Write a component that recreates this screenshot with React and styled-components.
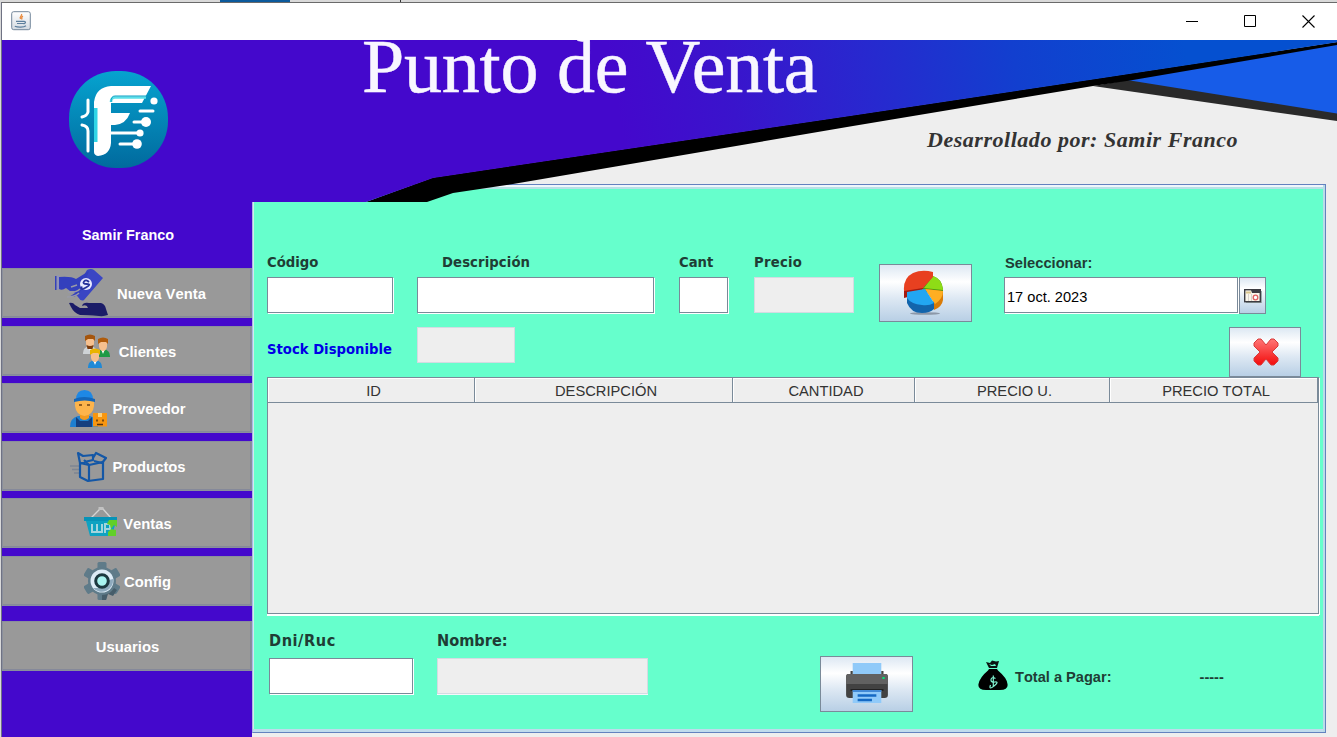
import React from "react";
import styled, { createGlobalStyle } from "styled-components";

const c = {
  purple: "#4408cc",
  mint: "#66ffcc",
  line: "#7a8a99",
  grey: "#999999",
  panel: "#eeeeee",
};

const Global = createGlobalStyle`
  * { box-sizing: border-box; }
  html, body { margin: 0; padding: 0; }
  body { background: #d9d9d9; font-family: "Liberation Sans", Arial, sans-serif; overflow: hidden; font-kerning: none; }
  button { font: inherit; cursor: pointer; }
`;

/* ---------- window ---------- */
const Desktop = styled.div`
  width: 1337px;
  height: 737px;
  padding: 2px 0 0 1px;
  background:
    linear-gradient(#0c5a9c, #0c5a9c) 220px 0 / 70px 2px no-repeat,
    linear-gradient(#333, #333) 400px 0 / 1px 2px no-repeat,
    #d9d9d9;
`;
const Window = styled.div`
  height: 735px;
  border-top: 1px solid #6a6a6a;
  border-left: 1px solid #6f7283;
  background: ${c.panel};
  display: flex;
  flex-direction: column;
`;
const TitleBar = styled.header`
  height: 37px;
  flex: none;
  background: #fff;
  display: flex;
  align-items: center;
  justify-content: space-between;
  padding: 0 0 2px 9px;
  svg { display: block; }
`;
const WindowControls = styled.div`
  display: flex;
  gap: 45px;
  padding: 2px 22px 0 0;
  align-items: center;
`;
const Body = styled.div`
  flex: 1;
  display: grid;
  grid-template-columns: 250px 1fr;
  min-height: 0;
`;

/* ---------- sidebar ---------- */
const Sidebar = styled.nav`
  background: ${c.purple};
  display: flex;
  flex-direction: column;
  align-items: stretch;
`;
const LogoWrap = styled.div`
  padding: 31px 0 0 67px;
  height: 185px;
  svg { display: block; }
`;
const UserName = styled.div`
  height: 43px;
  line-height: 20px;
  padding-left: 2px;
  text-align: center;
  color: #fff;
  font-weight: bold;
  font-size: 14.4px;
`;
const NavButton = styled.button`
  height: 50px;
  flex: none;
  margin: ${(p) => p.$gap}px 0 0;
  padding: 1px 0 0 1px;
  background: ${c.grey};
  border: 1px solid #8a8f9c;
  box-shadow: inset -1px -1px 0 #85899a;
  color: #fff;
  font-weight: bold;
  font-size: 14.8px;
  display: flex;
  align-items: center;
  justify-content: center;
  gap: 4px;
  overflow: hidden;
  svg { display: block; margin-top: -1px; flex: none; }
`;

/* ---------- header ---------- */
const Content = styled.main`
  display: flex;
  flex-direction: column;
  min-width: 0;
`;
const Header = styled.div`
  position: relative;
  z-index: 1;
  height: 144px;
  flex: none;
  display: flex;
  pointer-events: none;
`;
const BannerArt = styled.svg`
  position: absolute;
  left: 0;
  top: 0;
  display: block;
`;
const Title = styled.h1`
  position: relative;
  margin: -16px 0 0 110px;
  height: 84px;
  width: 470px;
  white-space: nowrap;
  font: normal 76px/84px "Liberation Serif", "Times New Roman", serif;
  letter-spacing: -0.25px;
  color: #f8f6ff;
  -webkit-text-stroke: 0.5px #f8f6ff;
  clip-path: inset(16px 0 0 0);
`;
const Credit = styled.div`
  position: relative;
  margin: 86px 0 0 95px;
  white-space: nowrap;
  font: italic bold 22px/28px "Liberation Serif", "Times New Roman", serif;
  letter-spacing: 0.53px;
  color: #333;
`;

/* ---------- sale panel ---------- */
const Panel = styled.section`
  width: 1074px;
  height: 549px;
  border: 1px solid #6382bf;
  border-left-color: #a9b8e8;
  background: ${c.mint};
  box-shadow: inset -2px 0 0 #b8dce8, inset 0 -3px 0 #c0dced, inset 0 2px 0 #f0f6fc, inset 0 4px 0 #b8e0e6, inset 1px 0 0 #d3ece9;
  padding: 67px 0 0 14px;
  display: flex;
  flex-direction: column;
`;
const FormRow = styled.div`
  display: flex;
  align-items: flex-start;
  height: ${(p) => p.$h}px;
  flex: none;
`;
const Field = styled.label`
  display: flex;
  flex-direction: column;
  margin-right: ${(p) => p.$after || 0}px;
`;
const Caption = styled.span`
  height: 25px;
  line-height: 20px;
  padding-left: ${(p) => p.$indent || 0}px;
  font-family: "DejaVu Sans Condensed", "DejaVu Sans", sans-serif;
  font-stretch: condensed;
  font-weight: bold;
  font-size: ${(p) => p.$size || 14.7}px;
  letter-spacing: ${(p) => p.$track || 0}px;
  color: #1f3d35;
  white-space: nowrap;
`;
const DateCaption = styled(Caption)`
  padding: 1px 0 0 1px;
  font-family: "Liberation Sans", Arial, sans-serif;
`;
const StockCaption = styled(Caption)`
  width: 150px;
  padding-top: 12px;
  color: #0000e6;
`;
const Input = styled.input`
  display: block;
  width: ${(p) => p.$w}px;
  height: 36px;
  margin: 0;
  padding: 3px 2px 0;
  outline: none;
  border: 1px solid ${c.line};
  border-radius: 0;
  background: #fff;
  box-shadow: 1px 1px 0 #fff;
  font: 14.6px "Liberation Sans", Arial, sans-serif;
  color: #000;
  &:disabled {
    background: ${c.panel};
    border-color: #d3dbe2;
    box-shadow: ${(p) => (p.$lined ? "0 1px 0 #f4f8fa" : "none")};
  }
`;
const MetalButton = styled.button`
  width: ${(p) => p.$w}px;
  height: ${(p) => p.$h}px;
  margin: ${(p) => p.$m || 0};
  padding: ${(p) => p.$pad || 0};
  flex: none;
  display: flex;
  align-items: center;
  justify-content: center;
  border: 1px solid ${c.line};
  background: linear-gradient(#dde8f3 0%, #ffffff 30%, #dde8f3 60%, #b8cfe5 100%);
  svg { display: block; }
`;
const DateRow = styled.div`
  display: flex;
  gap: 1px;
`;
const Table = styled.div`
  width: 1052px;
  height: 237px;
  flex: none;
  border: 1px solid ${c.line};
  background: ${c.panel};
  box-shadow: 1px 1px 0 #fff, 0 2px 0 #fff;
`;
const TableHead = styled.div`
  display: grid;
  grid-template-columns: 207px 258px 182px 195px 1fr;
  grid-auto-rows: 25px;
`;
const HeadCell = styled.div`
  border-right: 1px solid ${c.line};
  border-bottom: 1px solid ${c.line};
  box-shadow: inset 1px 1px 0 #fff;
  text-align: center;
  line-height: 27px;
  padding-left: 5px;
  font-size: 14.7px;
  color: #333;
`;
const Footer = styled.div`
  display: flex;
  align-items: flex-start;
  padding: 16px 0 0 2px;
`;
const FooterField = styled(Field)`
  ${Caption} { height: 28px; line-height: 22px; }
`;
const Total = styled.div`
  display: flex;
  align-items: flex-start;
  margin: 30px 0 0 65px;
  height: 34px;
  line-height: 34px;
  font-weight: bold;
  font-size: 14.6px;
  color: #1f3d35;
  svg { display: block; margin-right: 7px; }
`;
const Amount = styled.span`
  margin-left: 88px;
`;

/* ---------- drawings ---------- */
const JavaIcon = () => (
  <svg width="20" height="20" viewBox="0 0 20 20">
    <defs>
      <linearGradient id="jv" x1="0" y1="0" x2="0" y2="1">
        <stop offset="0" stopColor="#fff" />
        <stop offset="1" stopColor="#d3dae1" />
      </linearGradient>
    </defs>
    <rect x=".7" y=".7" width="18.6" height="18" rx="2" fill="url(#jv)" stroke="#73879b" />
    <path d="M10.5 3c1 2-2.600 2.500-1 5M12 5c-2 1-1.500 2-1 3.500" fill="none" stroke="#e98a3c" strokeWidth="1.300" />
    <path d="M5 10.300h8.500M6 12.500h7M3.800 15.300c3 1.200 9 1.200 11.200-.6M13 10.500c2-.3 2 2-.4 2.300" fill="none" stroke="#5d7f9d" strokeWidth="1.200" />
  </svg>
);

const Logo = () => (
  <svg width="99" height="97" viewBox="0 0 99 97">
    <defs>
      <linearGradient id="lg" x1="0" y1="0" x2="0" y2="1">
        <stop offset="0" stopColor="#06a3cf" />
        <stop offset="1" stopColor="#016a9e" />
      </linearGradient>
    </defs>
    <rect width="99" height="97" rx="47" fill="url(#lg)" />
    <path d="M42 15H82L73 32H42V42H61Q57 53 46 54H42V72Q41 84 29 85Q25 84 25 81V31Q27 16 42 15Z" fill="#fff" />
    <path d="M42 31q0-4.500 4-4.500h31" fill="none" stroke="#5adfe9" strokeWidth="2.600" />
    <path d="M42 31q0-6 4-6h32" fill="none" stroke="#0a9fc4" strokeWidth="1" />
    <rect x="25" y="37" width="3.500" height="34" fill="#31d5e6" />
    <g fill="none" stroke="#fff" strokeWidth="3" strokeLinecap="round">
      <path d="M19 29v12q-1 4-6 5" />
      <path d="M13 54q6 1 6 6v20" />
      <path d="M71 40h13M65 51h12M42 62h28M51 73h16" />
    </g>
    <g fill="#fff">
      <circle cx="85" cy="30" r="3.600" />
      <circle cx="77" cy="51" r="5" />
      <circle cx="71" cy="62" r="3.600" />
      <circle cx="68" cy="73" r="4.800" />
    </g>
  </svg>
);

const SaleIcon = () => (
  <svg width="64" height="50" viewBox="0 0 64 50">
    <path d="M38 2Q42 0 45 2L54 10L35 32Q32 34 29 29L25 24Z" fill="#3a46c4" />
    <path d="M6 8h1.500v14H6zM10 9Q22 8 27 11L40 3L34 18Q31 26 25 29L20 29L29 23H21L17 20Q13 23 10 21Z" fill="#3340bd" />
    <path d="M9 7.500v14" stroke="#8d90c8" strokeWidth="1.500" />
    <path d="M22 19l6-2M19 24q8 1 12-3M18 29q8 0 12-4" stroke="#9a9ba6" strokeWidth="1.500" fill="none" />
    <circle cx="37" cy="16" r="6" fill="#e8eaff" />
    <path d="M40 14q-3-3-5-.5t3 2.500-1 3.500-4-1" fill="none" stroke="#26329c" strokeWidth="1.800" />
    <path d="M20 35q4-1 6 2l5 3h8q-1-4-6-2 1-4 7-3h12q4 1 5 6l2 6q-4 1.500-9 1-13-1-19-1-6-2-9-8Z" fill="#1b1c68" />
  </svg>
);

const Person = ({ x, y, shirt, hair }) => (
  <g transform={`translate(${x} ${y})`}>
    <path d="M0 18q0-6 7-7 7 1 7 7v1H0z" fill={shirt} />
    <path d="M5 11h4l-2 5z" fill="#fff" />
    <path d="M3 3h8v6q-1 4-4 4T3 9z" fill="#f6c08e" />
    <path d="M2 6V1q5-3 10 0v5l-2-2H5z" fill={hair} />
  </g>
);

const ClientsIcon = () => (
  <svg width="36" height="36" viewBox="0 0 36 36">
    <Person x={4} y={2} shirt="#cfd3d6" hair="#a5560e" />
    <Person x={17} y={5} shirt="#1f9a45" hair="#b05c0c" />
    <path d="M7.500 12q3.500 2 7 0l-1 4h-5z" fill="#7b3b0c" />
    <Person x={9} y={16} shirt="#2089d6" hair="#e9b400" />
  </svg>
);

const SupplierIcon = () => (
  <svg width="39" height="40" viewBox="2 0 39 40">
    <path d="M3 39q0-9 8-11h12q8 2 8 11z" fill="#1e7fd0" />
    <path d="M9 29v10h16V29l-4 4h-8z" fill="#153f7f" />
    <path d="M13 24h9v6q-5 4-9 0z" fill="#f29a1f" />
    <path d="M8 12h19v6q-1 9-9.500 10Q9 27 8 18z" fill="#fdb44b" />
    <path d="M9 12Q9 2 17.500 2T26 12z" fill="#1e88e5" />
    <path d="M7 11q10-4 21 0v3q-10-3-21 0z" fill="#1466b8" />
    <path d="M12 17h3M20 17h3" stroke="#704214" strokeWidth="1.500" />
    <rect x="26" y="25" width="14" height="13.500" fill="#f8960f" />
    <path d="M31 25h4v4h-4z" fill="#ffd179" />
    <path d="M30 31.500v2m6-2v2m-6 3h6" stroke="#573410" strokeWidth="1.500" />
  </svg>
);

const BoxIcon = () => (
  <svg width="39" height="36" viewBox="0 0 39 36">
    <path d="M1 18h9M3 21.500h7M5 25h5" stroke="#7d8592" strokeWidth="1.500" />
    <g fill="none" stroke="#1457a6" strokeWidth="2.200" strokeLinejoin="round">
      <path d="M11 15v14l8 4 15-2V14l-14 3-9-2" />
      <path d="M20 17v16M11 15l-2-10 5 3 10-1v5l-13 3M20 17l-5-5M24 10l3-5 10 5-4 5-8-2" />
    </g>
  </svg>
);

const BasketIcon = () => (
  <svg width="36" height="36" viewBox="0 2 36 36">
    <path d="M8 15l9-9h3l8 9" fill="none" stroke="#d4d4d4" strokeWidth="1.300" />
    <rect x="15.500" y="4" width="5" height="3" fill="#c2c2c2" />
    <path d="M3 18h30l-4 15H7z" fill="#0fa2c1" />
    <path d="M1 14h33v4H1z" fill="#0793b7" />
    <path d="M9 21v8h10v-8m-5 0v8m8 1v-9h5v5h-5" fill="none" stroke="#a3d5dd" strokeWidth="2" />
    <path d="M26 17h8v7l-3-2-3 4 5 1v6h-8v-4l3-3-1-4-3-1z" fill="#61cf28" />
  </svg>
);

const GearIcon = () => (
  <svg width="36" height="38" viewBox="0 0 36 38">
    <g fill="#5f7b89">
      {[0, 60, 120].map((a) => (
        <rect key={a} x="13.500" y="0" width="9" height="38" rx="1.500" transform={`rotate(${a} 18 19)`} />
      ))}
      <circle cx="18" cy="19" r="14" />
    </g>
    <path d="M18 33a14 14 0 0 0 12-7l3 2-4 6-5-2-2 6h-4z" fill="#465d6a" />
    <circle cx="18" cy="19" r="11.500" fill="#dcebf6" />
    <path d="M9 26a11.500 11.500 0 0 0 20-9l-4 1-7 8z" fill="#8eaabd" />
    <circle cx="18" cy="19" r="6.300" fill="#a8f4f0" stroke="#1c3940" strokeWidth="3" />
  </svg>
);

const PieIcon = () => (
  <svg width="42" height="46" viewBox="0 0 42 46">
    <ellipse cx="22" cy="43.500" rx="15" ry="1.300" fill="#6f7784" opacity=".65" />
    <path d="M1 18v10l4-1 16-8 9-12v-4z" fill="#a41a10" />
    <path d="M20 17L30 6q9 3 10 13v3H20z" fill="#4b9914" />
    <path d="M21 18L30 6q9 3 10 14z" fill="#8edc16" />
    <path d="M22 19l18 2v9q-1 7-9 10V32z" fill="#d97b07" />
    <path d="M22 19l18 2q0 8-8 13z" fill="#ffae22" />
    <path d="M4 23v10q4 10 15 10 8 0 12-4V32z" fill="#1265ac" />
    <path d="M4 22l18-3 9 14q-5 3-12 2Q8 34 4 28z" fill="#22a6f2" />
    <path d="M1 21Q0 8 10 3q9-4 20-1v5L20 18z" fill="#e84020" />
  </svg>
);

const CrossIcon = () => (
  <svg width="28" height="28" viewBox="0 0 28 28">
    <defs>
      <linearGradient id="cr" x1="0" y1="0" x2="0" y2="1">
        <stop offset="0" stopColor="#ff7676" />
        <stop offset="1" stopColor="#f20c0c" />
      </linearGradient>
    </defs>
    <path d="M6 1h3l5 6 5-6h3l4 4v3l-6 6 6 6v3l-4 4h-3l-5-6-5 6H6l-4-4v-3l6-6-6-6V5z" fill="url(#cr)" stroke="#d83a3a" />
  </svg>
);

const CalendarIcon = () => (
  <svg width="18" height="14" viewBox="0 0 18 14">
    <path d="M2 2h16v12H2z" fill="#9aa" />
    <rect x=".7" y=".7" width="15.600" height="12" fill="#fbf6ea" stroke="#3c3c42" strokeWidth="1.400" />
    <path d="M2 2.500h5v2H2z" fill="#d9c58c" />
    <path d="M7 1h9v3H8z" fill="#3c3c42" />
    <path d="M4.500 5v7M7.500 5v7" stroke="#d8d3cc" />
    <circle cx="11.500" cy="8.500" r="2.300" fill="#fff" stroke="#e06060" strokeWidth="1.300" />
  </svg>
);

const PrinterIcon = () => (
  <svg width="44" height="42" viewBox="0 0 40 42" preserveAspectRatio="none">
    <path d="M7 0h26v12H7z" fill="#90caf9" />
    <path d="M5 8h2v4H5zM33 8h2v4h-2z" fill="#424242" />
    <path d="M3 11h34q2 0 2 3v18q0 3-3 3H4q-3 0-3-3V14q0-3 2-3z" fill="#424242" />
    <path d="M3 11h34q2 0 2 3v7H1v-7q0-3 2-3z" fill="#616161" />
    <path d="M5 26h30v2H5z" fill="#222" />
    <path d="M7 27h26v13H7z" fill="#90caf9" />
    <path d="M7 27h26v2H7z" fill="#4289d6" />
    <path d="M11.500 32.500h17M11.500 37h13" stroke="#1469c4" strokeWidth="2.300" />
    <rect x="34" y="14" width="2" height="2" fill="#00e676" />
  </svg>
);

const MoneyBagIcon = () => (
  <svg width="30" height="32" viewBox="0 0 30 32">
    <path d="M8 2l4 1 2-2.500 4 1 3-.5-2 7H11z" fill="#0a1512" />
    <path d="M11 4l3 1 3-1 1 2h-5z" fill="#66ffcc" />
    <path d="M11 9h8l1 1.500Q29 18 29.500 24q1 6-7.500 6H8q-8.500 0-7.500-6Q2 17 10 10.500z" fill="#000" />
    <path d="M17.500 18.500q-4-2-4.500 1t4 2.500-1 4-3.500-1M15.300 15.500v11" fill="none" stroke="#7ff0cf" strokeWidth="1.200" />
  </svg>
);

const Banner = () => (
  <BannerArt width="1085" height="162" viewBox="252 40 1085 162">
    <defs>
      <linearGradient id="bn" gradientUnits="userSpaceOnUse" x1="620" y1="120" x2="1180" y2="20">
        <stop offset="0" stopColor={c.purple} />
        <stop offset=".2" stopColor="#3a14cc" />
        <stop offset=".45" stopColor="#2729cf" />
        <stop offset=".7" stopColor="#123fcf" />
        <stop offset="1" stopColor="#0550d0" />
      </linearGradient>
    </defs>
    <path d="M1093 86L1130 79.500L1337 112V121Z" fill="#2a2a2a" />
    <path d="M1127 80L1337 43V113.500Z" fill="#175ce8" />
    <path d="M366 202L433 177.500L850 115.500L1096 78.500L1337 42V45L1130 80.500L1093 86L850 126.500L513 184L453 193L427 202Z" fill="#000" />
    <path d="M252 40H1337V42.300L1096 79L850 116L433 178L366 202H252Z" fill="url(#bn)" />
  </BannerArt>
);

const navItems = [
  { label: "Nueva Venta", Icon: SaleIcon, gap: 0 },
  { label: "Clientes", Icon: ClientsIcon, gap: 8 },
  { label: "Proveedor", Icon: SupplierIcon, gap: 7 },
  { label: "Productos", Icon: BoxIcon, gap: 8 },
  { label: "Ventas", Icon: BasketIcon, gap: 7 },
  { label: "Config", Icon: GearIcon, gap: 8 },
  { label: "Usuarios", gap: 15 },
];

const columns = ["ID", "DESCRIPCIÓN", "CANTIDAD", "PRECIO U.", "PRECIO TOTAL"];

export default function App() {
  return (
    <>
      <Global />
      <Desktop>
        <Window>
          <TitleBar>
            <JavaIcon />
            <WindowControls>
              <svg width="13" height="13" viewBox="0 0 13 13"><path d="M0 6.500h12" stroke="#000" /></svg>
              <svg width="13" height="13" viewBox="0 0 13 13"><path d="M.5 .5h11v11H.5z" fill="none" stroke="#000" /></svg>
              <svg width="13" height="13" viewBox="0 0 13 13"><path d="M.5 .5l12 12M12.500 .5l-12 12" stroke="#000" strokeWidth="1.100" /></svg>
            </WindowControls>
          </TitleBar>
          <Body>
            <Sidebar>
              <LogoWrap><Logo /></LogoWrap>
              <UserName>Samir Franco</UserName>
              {navItems.map(({ label, Icon, gap }) => (
                <NavButton key={label} $gap={gap}>
                  {Icon && <Icon />}
                  {label}
                </NavButton>
              ))}
            </Sidebar>
            <Content>
              <Header>
                <Banner />
                <Title>Punto de Venta</Title>
                <Credit>Desarrollado por: Samir Franco</Credit>
              </Header>
              <Panel>
                <FormRow $h={75}>
                  <Field $after={24}><Caption>Código</Caption><Input $w={126} /></Field>
                  <Field $after={25}><Caption $indent={25} $track={0.1}>Descripción</Caption><Input $w={237} /></Field>
                  <Field $after={26}><Caption>Cant</Caption><Input $w={49} /></Field>
                  <Field $after={25}><Caption $track={0.25}>Precio</Caption><Input $w={100} disabled /></Field>
                  <MetalButton $w={93} $h={58} $m="12px 32px 0 0" $pad="0 4px 0 0"><PieIcon /></MetalButton>
                  <Field as="div">
                    <DateCaption>Seleccionar:</DateCaption>
                    <DateRow>
                      <Input $w={234} defaultValue="17 oct. 2023" />
                      <MetalButton $w={27} $h={37}><CalendarIcon /></MetalButton>
                    </DateRow>
                  </Field>
                </FormRow>
                <FormRow $h={50}>
                  <StockCaption>Stock Disponible</StockCaption>
                  <Input $w={98} disabled />
                  <MetalButton $w={72} $h={50} $m="0 0 0 714px" $pad="0 0 0 2px"><CrossIcon /></MetalButton>
                </FormRow>
                <Table>
                  <TableHead>
                    {columns.map((name) => <HeadCell key={name}>{name}</HeadCell>)}
                  </TableHead>
                </Table>
                <Footer>
                  <FooterField $after={24}><Caption $size={16.2} $track={0.55}>Dni/Ruc</Caption><Input $w={144} /></FooterField>
                  <FooterField><Caption $size={16.2}>Nombre:</Caption><Input $w={211} $lined disabled /></FooterField>
                  <MetalButton $w={93} $h={56} $m="26px 0 0 172px"><PrinterIcon /></MetalButton>
                  <Total>
                    <MoneyBagIcon />
                    Total a Pagar:
                    <Amount>-----</Amount>
                  </Total>
                </Footer>
              </Panel>
            </Content>
          </Body>
        </Window>
      </Desktop>
    </>
  );
}
